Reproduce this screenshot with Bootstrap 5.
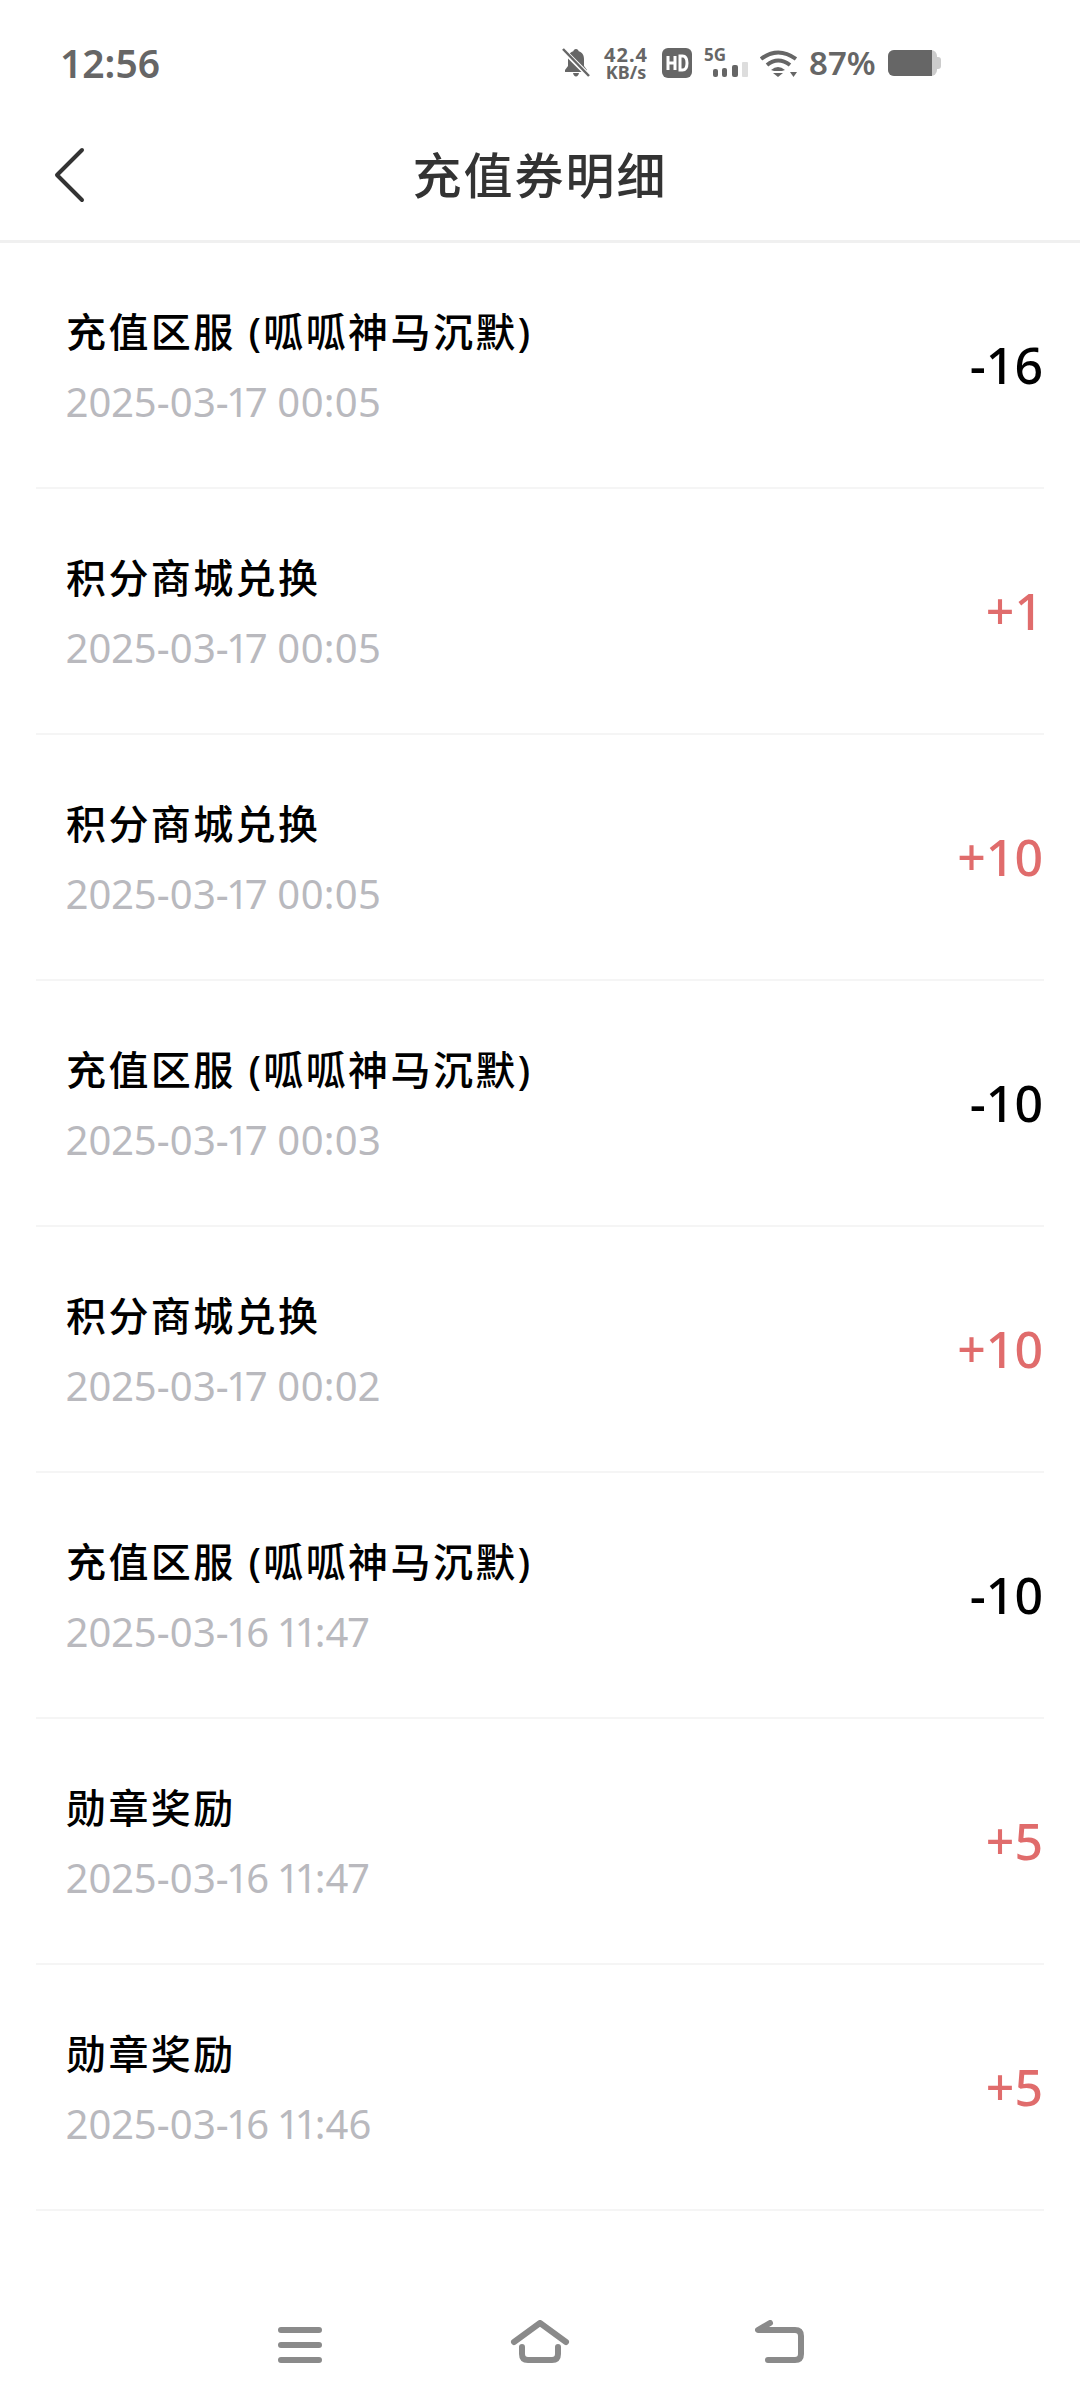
<!DOCTYPE html>
<html lang="zh-CN">
<head>
    <meta charset="UTF-8">
    <meta name="viewport" content="width=device-width, initial-scale=1.0">
    <title>充值券明细</title>
    <link rel="stylesheet" href="https://cdn.jsdelivr.net/npm/bootstrap@5.3.0/dist/css/bootstrap.min.css">
    <script src="https://cdn.jsdelivr.net/npm/bootstrap@5.3.0/dist/js/bootstrap.bundle.min.js"></script>
    <style>
        html, body { height: 100%; }
        body {
            width: 1080px;
            height: 2408px;
            overflow: hidden;
            background: #fff;
            font-family: "Noto Sans", "Noto Sans CJK SC", sans-serif;
        }
        .status-bar { height: 112px; padding: 13px 0 0 60px; color: #666; }
        .status-time { width: 93px; font-size: 39px; font-weight: 600; line-height: 1; white-space: nowrap; }
        .status-icons { margin-left: 409px; gap: 12px; }
        .net-speed { width: 48px; font-weight: 700; text-align: center; white-space: nowrap; }
        .net-speed span { display: block; }
        .net-top { font-size: 20px; line-height: 18px; letter-spacing: 1px; }
        .net-unit { font-size: 18px; line-height: 16px; }
        .net-group { width: 44px; height: 29px; }
        .five-g { font-size: 17px; font-weight: 700; line-height: 14px; }
        .battery-pct { font-size: 33px; font-weight: 600; line-height: 1; }
        .title-bar { height: 131px; border-bottom: 3px solid #f0f0f0; }
        .back-btn { left: 54px; top: 35px; }
        .page-title { font-size: 49px; font-weight: 500; color: #333; line-height: 1; margin-top: -2px; letter-spacing: 2px; }
        .record-list { padding: 0 36px; }
        .record-row { height: 246px; border-bottom: 2px solid #f5f5f5; padding: 0 1px 0 30px; }
        .record-name { font-size: 40px; font-weight: 500; color: #000; line-height: 1; letter-spacing: 2.4px; margin-top: 4px; }
        .record-date { font-size: 40px; color: #b9b9be; line-height: 1; margin-top: 30px; font-variant-numeric: proportional-nums; }
        .record-amount { font-size: 50px; font-weight: 500; line-height: 1; color: #000; }
        .record-amount.plus { color: #e06c6c; }
        .nav-bar { left: 277px; top: 2320px; }
        .nav-home { margin-left: 187px; }
        .nav-back { margin-left: 185px; }
    </style>
</head>
<body>

    <div class="status-bar d-flex align-items-center">
        <div class="status-time">12:56</div>
        <div class="status-icons d-flex align-items-center">
            <svg width="28" height="30" viewBox="0 0 28 30"><path d="M14 1c-1.500 0-2.500 1-2.700 2.300C7.500 4.300 6 7.500 6 11v7l-3 4v2h22v-2l-3-4v-7c0-3.500-1.500-6.700-5.300-7.700C16.500 2 15.500 1 14 1zM11 25c.5 2 1.500 3.500 3 3.500s2.500-1.500 3-3.500z" fill="#666"/><path d="M1 2l26 26" stroke="#fff" stroke-width="5"/><path d="M1 1l26 27" stroke="#666" stroke-width="2.500"/></svg>
            <div class="net-speed"><span class="net-top">42.4</span><span class="net-unit">KB/s</span></div>
            <svg width="30" height="30" viewBox="0 0 30 30"><rect width="30" height="30" rx="6" fill="#666"/><path d="M6 8v14M13 8v14M6 15h7" stroke="#fff" stroke-width="3" fill="none"/><path d="M18 8v14h2.500c3 0 4.500-2 4.500-7s-1.500-7-4.500-7z" stroke="#fff" stroke-width="3" fill="none"/></svg>
            <div class="net-group position-relative">
                <div class="five-g">5G</div>
                <svg class="position-absolute bottom-0 start-0" width="44" height="15" viewBox="0 0 44 15"><rect x="9" y="7" width="5" height="8" rx="2" fill="#666"/><rect x="18" y="6" width="5" height="9" rx="2" fill="#666"/><rect x="28" y="3" width="6" height="12" rx="2" fill="#666"/><rect x="38" y="0" width="6" height="15" rx="1" fill="#ddd"/></svg>
            </div>
            <svg width="37" height="28" viewBox="0 0 37 28"><path d="M1 10Q18-3 36 10M7 16Q18 7 30 16" fill="none" stroke="#666" stroke-width="4"/><path d="M11 21Q18 15 25 21l-3 1h-8z" fill="#666"/><path d="M13 24h10l-5 4z" fill="#666"/><path d="M30 23h7l-3.500 5z" fill="#666"/></svg>
            <div class="battery-pct">87%</div>
            <svg width="53" height="26" viewBox="0 0 53 26"><rect width="49" height="26" rx="6" fill="#ccc"/><path d="M6 0h38v26H6a6 6 0 0 1-6-6V6a6 6 0 0 1 6-6z" fill="#666"/><path d="M49 7h1a3 3 0 0 1 3 3v6a3 3 0 0 1-3 3h-1z" fill="#ccc"/></svg>
        </div>
    </div>

    <div class="title-bar position-relative d-flex align-items-center justify-content-center">
        <svg class="back-btn position-absolute" width="32" height="56" viewBox="0 0 32 56"><path d="M28 3L3 28l25 25" fill="none" stroke="#333" stroke-width="4" stroke-linecap="round" stroke-linejoin="round"/></svg>
        <div class="page-title">充值券明细</div>
    </div>

    <div class="record-list" id="records"></div>

    <div class="nav-bar position-absolute d-flex align-items-start">
        <svg width="46" height="44" viewBox="0 0 46 44"><path d="M4 10h38M4 25h38M4 40h38" stroke="#8a8a8a" stroke-width="6" stroke-linecap="round" fill="none"/></svg>
        <svg class="nav-home" width="60" height="44" viewBox="0 0 60 44"><path d="M4 22L30 3l26 19M12 27v7c0 4 2 6 6 6h24c4 0 6-2 6-6v-7" fill="none" stroke="#8a8a8a" stroke-width="6" stroke-linecap="round" stroke-linejoin="round"/></svg>
        <svg class="nav-back" width="52" height="44" viewBox="0 0 52 44"><path d="M15 3L3 10h37c4 0 6 2 6 6v18c0 4-2 6-6 6H13" fill="none" stroke="#8a8a8a" stroke-width="6" stroke-linecap="round" stroke-linejoin="round"/></svg>
    </div>

    <script>
        const records = [
            ['充值区服 (呱呱神马沉默)', '2025-03-17 00:05', '-16'],
            ['积分商城兑换', '2025-03-17 00:05', '+1'],
            ['积分商城兑换', '2025-03-17 00:05', '+10'],
            ['充值区服 (呱呱神马沉默)', '2025-03-17 00:03', '-10'],
            ['积分商城兑换', '2025-03-17 00:02', '+10'],
            ['充值区服 (呱呱神马沉默)', '2025-03-16 11:47', '-10'],
            ['勋章奖励', '2025-03-16 11:47', '+5'],
            ['勋章奖励', '2025-03-16 11:46', '+5']
        ];
        document.getElementById('records').innerHTML = records.map(r => `
            <div class="record-row d-flex align-items-center justify-content-between">
                <div>
                    <div class="record-name">${r[0]}</div>
                    <div class="record-date">${r[1]}</div>
                </div>
                <div class="record-amount ${r[2][0] === '+' ? 'plus' : ''}">${r[2]}</div>
            </div>`).join('');
    </script>

</body>
</html>
